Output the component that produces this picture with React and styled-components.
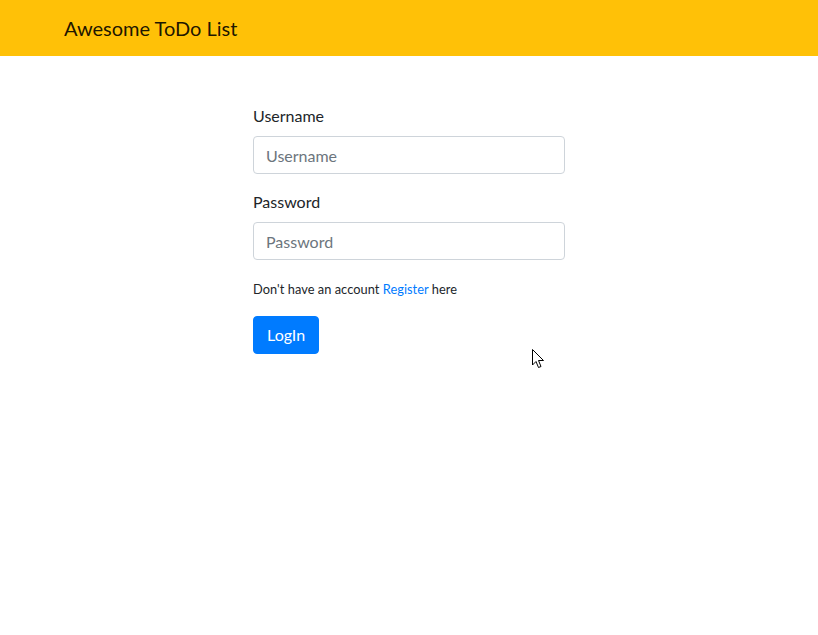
import React, { useState } from 'react';
import styled, { createGlobalStyle } from 'styled-components';

const GlobalStyle = createGlobalStyle`
  * {
    box-sizing: border-box;
  }

  body {
    margin: 0;
    background: #fff;
    color: #212529;
    font-family: 'Segoe UI', Lato, 'Noto Sans', sans-serif;
    font-size: 16px;
    line-height: 1.5;
  }
`;

const Page = styled.div`
  position: relative;
  min-height: 635px;
`;

const Navbar = styled.nav`
  height: 56px;
  background: #ffc107;
  display: flex;
  align-items: center;
`;

const Container = styled.div`
  width: 720px;
  margin: 0 auto;
  padding: 0 15px;
`;

const Brand = styled.a`
  font-size: 20px;
  line-height: 30px;
  color: rgba(0, 0, 0, 0.9);
  text-decoration: none;
`;

const Form = styled.form`
  width: 312px;
  margin: 48px auto 0;
`;

const Group = styled.div`
  margin-bottom: 16px;
`;

const Label = styled.label`
  display: block;
  margin-bottom: 8px;
`;

const Input = styled.input`
  display: block;
  width: 100%;
  height: 38px;
  padding: 6px 12px;
  font: inherit;
  color: #495057;
  border: 1px solid #ced4da;
  border-radius: 4px;
  outline: none;

  &::placeholder {
    color: #6c757d;
  }
`;

const Note = styled.p`
  margin: 0 0 14px;
  font-size: 12.8px;
  line-height: 26px;
  letter-spacing: 0.05px;
`;

const Link = styled.a`
  color: #007bff;
  text-decoration: none;
`;

const Button = styled.button`
  height: 38px;
  padding: 6px 13px;
  font: inherit;
  color: #fff;
  background: #007bff;
  border: 1px solid #007bff;
  border-radius: 4px;
`;

const Cursor = styled.svg`
  position: absolute;
  left: 532px;
  top: 349px;
`;

export default function App() {
  const [username, setUsername] = useState('');
  const [password, setPassword] = useState('');

  return (
    <Page>
      <GlobalStyle />
      <Navbar>
        <Container>
          <Brand href="#">Awesome ToDo List</Brand>
        </Container>
      </Navbar>
      <Form onSubmit={(e) => e.preventDefault()}>
        <Group>
          <Label htmlFor="username">Username</Label>
          <Input
            id="username"
            placeholder="Username"
            value={username}
            onChange={(e) => setUsername(e.target.value)}
          />
        </Group>
        <Group>
          <Label htmlFor="password">Password</Label>
          <Input
            id="password"
            type="password"
            placeholder="Password"
            value={password}
            onChange={(e) => setPassword(e.target.value)}
          />
        </Group>
        <Note>
          Don't have an account <Link href="#">Register</Link> here
        </Note>
        <Button type="submit">LogIn</Button>
      </Form>
      <Cursor width="13" height="21" viewBox="0 0 13 21">
        <path
          d="M0.5 0.5 L0.5 16 L4 12.5 L6.5 18.5 L9 17.5 L6.5 11.5 L11.5 11.5 Z"
          fill="#fff"
          stroke="#000"
          strokeWidth="1"
          strokeLinejoin="round"
        />
      </Cursor>
    </Page>
  );
}
